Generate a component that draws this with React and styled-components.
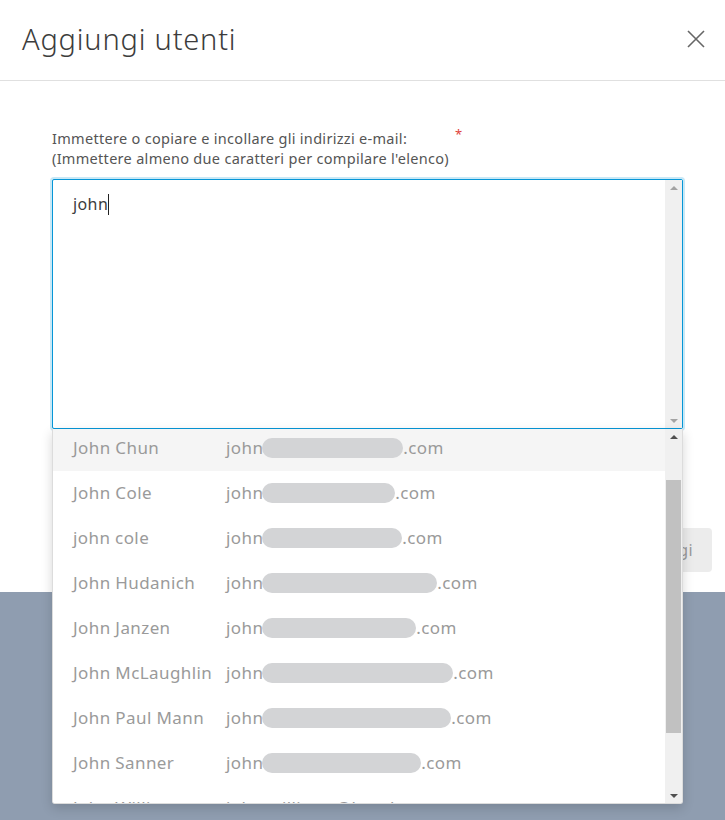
import React from 'react';
import styled, { createGlobalStyle, css } from 'styled-components';

const GlobalStyle = createGlobalStyle`
  html, body {
    margin: 0;
    padding: 0;
    background: #8f9db0;
    font-family: "Noto Sans", "Open Sans", Arial, sans-serif;
  }
  * {
    box-sizing: border-box;
  }
`;

const Page = styled.div`
  width: 725px;
  height: 820px;
  overflow: hidden;
  background: #8f9db0;
`;

const Modal = styled.div`
  width: 725px;
  height: 592px;
  background: #ffffff;
  display: flex;
  flex-direction: column;
`;

const Header = styled.header`
  height: 81px;
  border-bottom: 1px solid #e0e0e0;
  display: flex;
  align-items: center;
  justify-content: space-between;
  padding: 0 18px 0 22px;
`;

const Title = styled.h2`
  margin: 0 0 3px;
  font-size: 29px;
  font-weight: 300;
  color: #3c3c3c;
  letter-spacing: 0.8px;
`;

const CloseButton = styled.button`
  width: 22px;
  height: 22px;
  border: 0;
  padding: 0;
  background: none;
  display: flex;
  align-items: center;
  justify-content: center;
  margin-bottom: 3px;
  cursor: pointer;
`;

const Body = styled.div`
  padding: 47px 42px 0 52px;
`;

const LabelLine = styled.div`
  display: flex;
  font-size: 14.5px;
  line-height: 20px;
  letter-spacing: 0.3px;
  color: #555555;
  white-space: nowrap;
`;

const LabelText = styled.span`
  min-width: 403px;
`;

const Required = styled.span`
  color: #e0423a;
  font-size: 13px;
  line-height: 12px;
`;

const InputWrap = styled.div`
  position: relative;
  margin-top: 11px;
  width: 631px;
`;

const TextBox = styled.div`
  height: 250px;
  border: 1px solid #0696d7;
  border-radius: 2px;
  box-shadow: 0 0 0 2px rgba(6, 150, 215, 0.22);
  display: flex;
  background: #ffffff;
`;

const TextContent = styled.div`
  flex: 1;
  padding: 12px 20px;
  font-size: 16px;
  line-height: 24px;
  letter-spacing: 0.4px;
  color: #3c3c3c;
  display: flex;
  align-items: flex-start;
`;

const Caret = styled.span`
  display: inline-block;
  width: 1px;
  height: 21px;
  margin-top: 2px;
  background: #222222;
`;

const ScrollTrack = styled.div`
  width: 17px;
  background: #f0f0f0;
  display: flex;
  flex-direction: column;
  align-items: center;
  justify-content: space-between;
  padding: 6px 0 5px;
  position: relative;
`;

const Arrow = styled.span`
  width: 0;
  height: 0;
  border-left: 4px solid transparent;
  border-right: 4px solid transparent;
  ${({ down, color }) =>
    down
      ? css`
          border-top: 4px solid ${color};
        `
      : css`
          border-bottom: 4px solid ${color};
        `}
`;

const Thumb = styled.div`
  position: absolute;
  left: 1px;
  right: 1px;
  top: ${({ top }) => top}px;
  height: ${({ size }) => size}px;
  background: #c1c1c1;
`;

const Dropdown = styled.div`
  position: absolute;
  top: 100%;
  left: 0;
  width: 631px;
  height: 375px;
  background: #ffffff;
  border: 1px solid #dcdcdc;
  border-top: 0;
  border-radius: 0 0 3px 3px;
  box-shadow: 0 4px 12px rgba(0, 0, 0, 0.16);
  display: flex;
  overflow: hidden;
  z-index: 5;
`;

const List = styled.ul`
  flex: 1;
  margin: -3px 0 0;
  padding: 0;
  list-style: none;
`;

const Row = styled.li`
  height: 45px;
  display: grid;
  grid-template-columns: 153px 1fr;
  align-items: center;
  padding: 0 0 2px 20px;
  font-size: 17px;
  letter-spacing: 0.4px;
  color: #9a9a9a;
  white-space: nowrap;
  background: ${({ active }) => (active ? '#f5f5f5' : '#ffffff')};
`;

const Email = styled.span`
  display: flex;
  align-items: center;
`;

const Redacted = styled.span`
  display: inline-block;
  height: 20px;
  border-radius: 10px;
  background: #d3d4d6;
  margin-left: -1px;
  width: ${({ w }) => w}px;
`;

const Footer = styled.div`
  margin-top: auto;
  display: flex;
  justify-content: flex-end;
  padding: 0 13px 20px 0;
`;

const AddButton = styled.button`
  height: 44px;
  padding: 0 19px;
  border: 0;
  border-radius: 4px;
  background: #ececec;
  color: #9a9a9a;
  font-family: inherit;
  font-size: 16px;
  letter-spacing: 0.4px;
`;

const users = [
  { name: 'John Chun', blob: 141 },
  { name: 'John Cole', blob: 133 },
  { name: 'john cole', blob: 140 },
  { name: 'John Hudanich', blob: 175 },
  { name: 'John Janzen', blob: 154 },
  { name: 'John McLaughlin', blob: 191 },
  { name: 'John Paul Mann', blob: 189 },
  { name: 'John Sanner', blob: 159 },
  { name: 'John Williams', email: 'john.williams@bentley.com' },
];

function CloseIcon() {
  return (
    <svg width="20" height="20" viewBox="0 0 20 20">
      <path d="M2 2 L18 18 M18 2 L2 18" stroke="#666666" strokeWidth="1.6" fill="none" />
    </svg>
  );
}

function App() {
  return (
    <Page>
      <GlobalStyle />
      <Modal>
        <Header>
          <Title>Aggiungi utenti</Title>
          <CloseButton aria-label="Chiudi">
            <CloseIcon />
          </CloseButton>
        </Header>
        <Body>
          <LabelLine>
            <LabelText>Immettere o copiare e incollare gli indirizzi e-mail:</LabelText>
            <Required>*</Required>
          </LabelLine>
          <LabelLine>(Immettere almeno due caratteri per compilare l'elenco)</LabelLine>
          <InputWrap>
            <TextBox>
              <TextContent>
                john
                <Caret />
              </TextContent>
              <ScrollTrack>
                <Arrow color="#a3a3a3" />
                <Arrow down color="#a3a3a3" />
              </ScrollTrack>
            </TextBox>
            <Dropdown>
              <List>
                {users.map((u, i) => (
                  <Row key={u.name} active={i === 0}>
                    <span>{u.name}</span>
                    {u.email ? (
                      <Email>{u.email}</Email>
                    ) : (
                      <Email>
                        john
                        <Redacted w={u.blob} />
                        .com
                      </Email>
                    )}
                  </Row>
                ))}
              </List>
              <ScrollTrack>
                <Arrow color="#505050" />
                <Thumb top={51} size={253} />
                <Arrow down color="#505050" />
              </ScrollTrack>
            </Dropdown>
          </InputWrap>
        </Body>
        <Footer>
          <AddButton>Aggiungi</AddButton>
        </Footer>
      </Modal>
    </Page>
  );
}

export default App;
